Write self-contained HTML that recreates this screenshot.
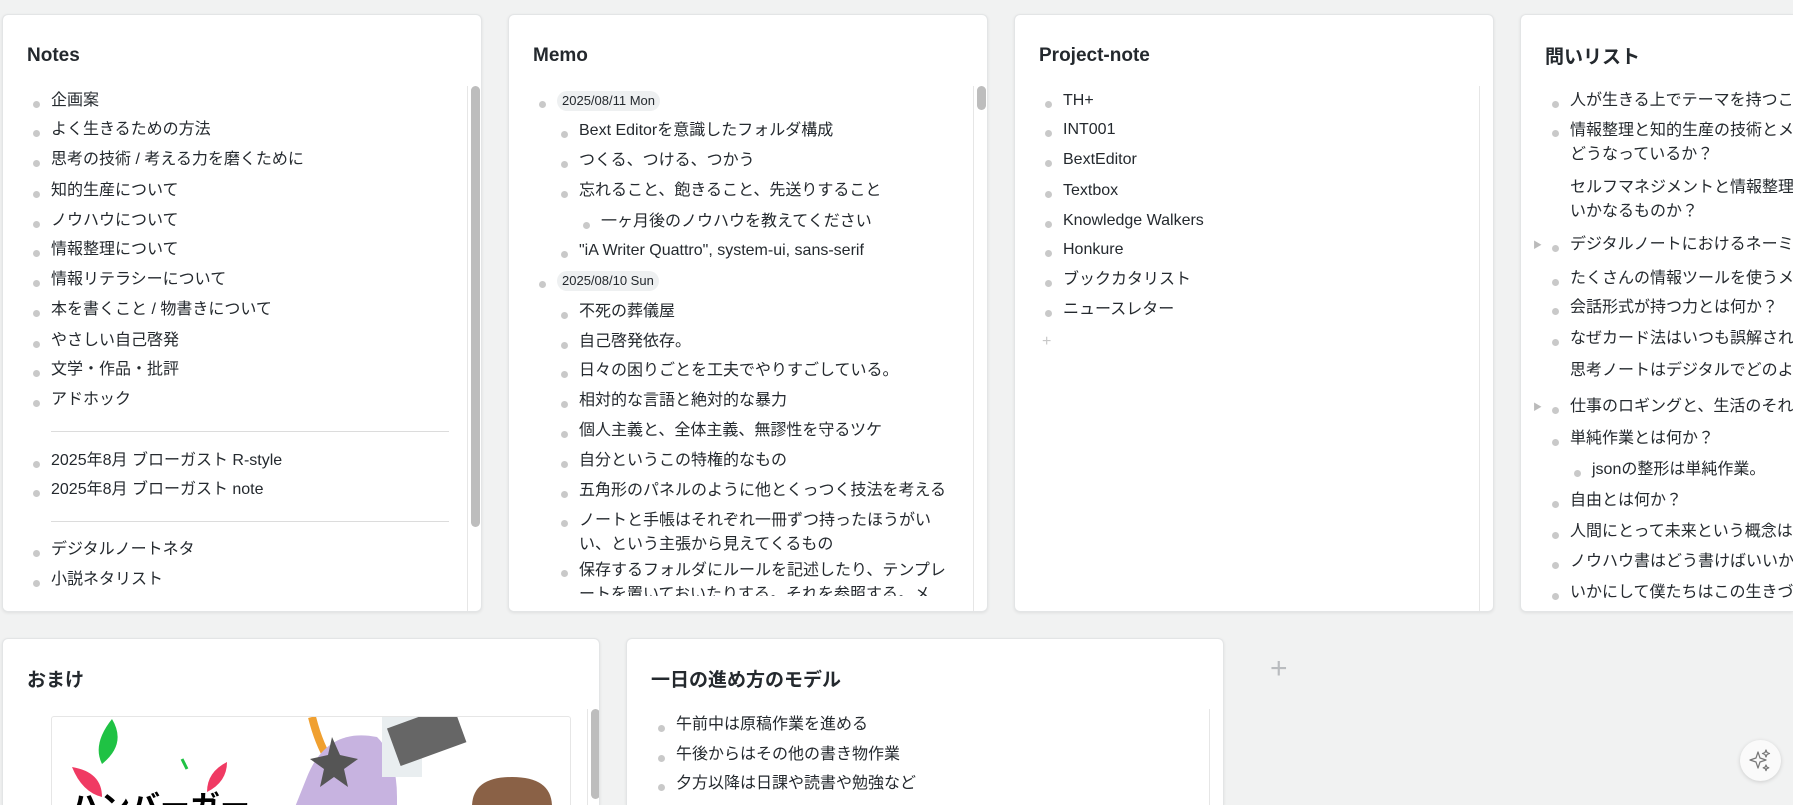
<!DOCTYPE html>
<html style="overflow:hidden;height:805px"><head><meta charset="utf-8"><style>
*{box-sizing:border-box;margin:0;padding:0}
body{width:1793px;height:805px;background:#f1f2f2;overflow:hidden;position:relative;font-family:"Liberation Sans","Noto Sans CJK JP",sans-serif;color:#24292e}
.card{position:absolute;background:#fff;border:1px solid #e3e5e6;border-radius:6px;box-shadow:0 1px 3px rgba(0,0,0,.08);overflow:hidden}
.t{position:absolute;left:24px;top:30px;font-size:19px;font-weight:bold;color:#24292e}
.i{position:absolute;height:30px;line-height:30px;font-size:16px;white-space:nowrap}
.i.b::before{content:"";position:absolute;left:-18px;top:15px;width:7px;height:7px;border-radius:50%;background:#c9c9c9}
.w{white-space:normal;line-height:24px;height:auto}
.w.b::before{top:11px}
.chip{display:inline-block;background:#eef0f1;border-radius:10px;font-size:13px;line-height:20px;padding:0 5px}
.sb{position:absolute;width:9px;border-radius:5px;background:#bdbdbd}
.tr{position:absolute;width:1px;background:#e6e6e6}
.sep{position:absolute;height:1px;background:#dcdcdc}
.ar{position:absolute;font-size:9px;color:#bbb}
</style></head><body>

<div class="card" style="left:2px;top:14px;width:480px;height:598px">
<div class="t">Notes</div>
<div class="tr" style="left:464px;top:71px;height:525px"></div>
<div class="sb" style="left:468px;top:71px;height:441px"></div>
<div class="i b" style="left:48px;top:71px">企画案</div>
<div class="i b" style="left:48px;top:100px">よく生きるための方法</div>
<div class="i b" style="left:48px;top:130px">思考の技術 / 考える力を磨くために</div>
<div class="i b" style="left:48px;top:161px">知的生産について</div>
<div class="i b" style="left:48px;top:191px">ノウハウについて</div>
<div class="i b" style="left:48px;top:220px">情報整理について</div>
<div class="i b" style="left:48px;top:250px">情報リテラシーについて</div>
<div class="i b" style="left:48px;top:280px">本を書くこと / 物書きについて</div>
<div class="i b" style="left:48px;top:311px">やさしい自己啓発</div>
<div class="i b" style="left:48px;top:340px">文学・作品・批評</div>
<div class="i b" style="left:48px;top:370px">アドホック</div>
<div class="sep" style="left:48px;top:416px;width:398px"></div>
<div class="i b" style="left:48px;top:431px">2025年8月 ブローガスト R-style</div>
<div class="i b" style="left:48px;top:460px">2025年8月 ブローガスト note</div>
<div class="sep" style="left:48px;top:506px;width:398px"></div>
<div class="i b" style="left:48px;top:520px">デジタルノートネタ</div>
<div class="i b" style="left:48px;top:550px">小説ネタリスト</div>
<div style="position:absolute;left:0;top:581px;width:464px;height:17px;background:#fff"></div>
</div>

<div class="card" style="left:508px;top:14px;width:480px;height:598px">
<div class="t">Memo</div>
<div class="tr" style="left:464px;top:71px;height:525px"></div>
<div class="sb" style="left:468px;top:71px;height:24px"></div>
<div class="i b" style="left:48px;top:71px"><span class="chip">2025/08/11 Mon</span></div>
<div class="i b" style="left:70px;top:101px">Bext Editorを意識したフォルダ構成</div>
<div class="i b" style="left:70px;top:131px">つくる、つける、つかう</div>
<div class="i b" style="left:70px;top:161px">忘れること、飽きること、先送りすること</div>
<div class="i b" style="left:92px;top:192px">一ヶ月後のノウハウを教えてください</div>
<div class="i b" style="left:70px;top:221px">"iA Writer Quattro", system-ui, sans-serif</div>
<div class="i b" style="left:48px;top:251px"><span class="chip">2025/08/10 Sun</span></div>
<div class="i b" style="left:70px;top:282px">不死の葬儀屋</div>
<div class="i b" style="left:70px;top:312px">自己啓発依存。</div>
<div class="i b" style="left:70px;top:341px">日々の困りごとを工夫でやりすごしている。</div>
<div class="i b" style="left:70px;top:371px">相対的な言語と絶対的な暴力</div>
<div class="i b" style="left:70px;top:401px">個人主義と、全体主義、無謬性を守るツケ</div>
<div class="i b" style="left:70px;top:431px">自分というこの特権的なもの</div>
<div class="i b" style="left:70px;top:461px">五角形のパネルのように他とくっつく技法を考える</div>
<div class="i b w" style="left:70px;top:494px;width:380px">ノートと手帳はそれぞれ一冊ずつ持ったほうがいい、という主張から見えてくるもの</div>
<div class="i b w" style="left:70px;top:544px;width:380px">保存するフォルダにルールを記述したり、テンプレートを置いておいたりする。それを参照する。メ</div>
<div style="position:absolute;left:0;top:581px;width:464px;height:17px;background:#fff"></div>
</div>

<div class="card" style="left:1014px;top:14px;width:480px;height:598px">
<div class="t">Project-note</div>
<div class="tr" style="left:464px;top:71px;height:525px"></div>
<div class="i b" style="left:48px;top:71px">TH+</div>
<div class="i b" style="left:48px;top:100px">INT001</div>
<div class="i b" style="left:48px;top:130px">BextEditor</div>
<div class="i b" style="left:48px;top:161px">Textbox</div>
<div class="i b" style="left:48px;top:191px">Knowledge Walkers</div>
<div class="i b" style="left:48px;top:220px">Honkure</div>
<div class="i b" style="left:48px;top:250px">ブックカタリスト</div>
<div class="i b" style="left:48px;top:280px">ニュースレター</div>
<div style="position:absolute;left:27px;top:318px;font-size:16px;color:#c8c8c8">+</div>
</div>

<div class="card" style="left:1520px;top:14px;width:273px;height:598px;border-right:none;border-radius:6px 0 0 6px">
<div class="t" style="top:27px">問いリスト</div>
<div class="i b" style="left:49px;top:71px">人が生きる上でテーマを持つこと</div>
<div class="i b w" style="left:49px;top:104px;width:260px">情報整理と知的生産の技術とメモ<br>どうなっているか？</div>
<div class="i w" style="left:49px;top:161px;width:260px">セルフマネジメントと情報整理の<br>いかなるものか？</div>
<div class="ar" style="left:12px;top:223px">▶</div>
<div class="i b" style="left:49px;top:215px">デジタルノートにおけるネーミング</div>
<div class="i b" style="left:49px;top:249px">たくさんの情報ツールを使うメリット</div>
<div class="i b" style="left:49px;top:278px">会話形式が持つ力とは何か？</div>
<div class="i b" style="left:49px;top:309px">なぜカード法はいつも誤解される</div>
<div class="i" style="left:49px;top:341px">思考ノートはデジタルでどのように</div>
<div class="ar" style="left:12px;top:385px">▶</div>
<div class="i b" style="left:49px;top:377px">仕事のロギングと、生活のそれ</div>
<div class="i b" style="left:49px;top:409px">単純作業とは何か？</div>
<div class="i b" style="left:71px;top:440px">jsonの整形は単純作業。</div>
<div class="i b" style="left:49px;top:471px">自由とは何か？</div>
<div class="i b" style="left:49px;top:502px">人間にとって未来という概念は</div>
<div class="i b" style="left:49px;top:532px">ノウハウ書はどう書けばいいか</div>
<div class="i b" style="left:49px;top:563px">いかにして僕たちはこの生きづらさ</div>
</div>

<div class="card" style="left:2px;top:638px;width:598px;height:167px;border-bottom:none;border-radius:6px 6px 0 0">
<div class="t" style="top:26px">おまけ</div>
<div class="tr" style="left:584px;top:70px;height:97px"></div>
<div class="sb" style="left:588px;top:70px;height:90px"></div>
<div style="position:absolute;left:48px;top:77px;width:520px;height:90px;border:1px solid #e6e6e6;border-bottom:none;border-radius:3px 3px 0 0;overflow:hidden;background:#fff">
<svg width="518" height="90">
<path d="M60 2 q-20 25 -10 45 q25 -20 10 -45z" fill="#1fc244"/>
<path d="M20 50 q10 25 30 30 q0 -25 -30 -30z" fill="#f03a63"/>
<path d="M175 45 q-20 10 -20 30 q20 -10 20 -30z" fill="#f03a63"/>
<path d="M130 42 l5 10" stroke="#1fc244" stroke-width="3"/>
<text x="18" y="100" font-size="30" font-weight="bold" font-family="Noto Sans CJK JP">ハンバーガー</text>
<path d="M260 0 q10 40 30 60" stroke="#f0a030" stroke-width="8" fill="none"/>
<path d="M255 60 q20 -50 70 -40 q20 20 20 60 l0 30 l-110 0z" fill="#c7b3e0"/>
<path d="M280 20 l8 18 l18 4 l-14 10 l4 18 l-14 -10 l-14 10 l4 -18 l-14 -10 l18 -4z" fill="#555"/>
<rect x="330" y="0" width="40" height="60" fill="#e9eef0"/>
<rect x="340" y="0" width="70" height="40" fill="#666" transform="rotate(-20 370 20)"/>
<path d="M420 90 q0 -30 40 -30 q40 0 40 30z" fill="#8a6146"/>
</svg>
</div>
</div>

<div class="card" style="left:626px;top:638px;width:598px;height:167px;border-bottom:none;border-radius:6px 6px 0 0">
<div class="t" style="top:26px">一日の進め方のモデル</div>
<div class="tr" style="left:582px;top:70px;height:97px"></div>
<div class="i b" style="left:49px;top:71px">午前中は原稿作業を進める</div>
<div class="i b" style="left:49px;top:101px">午後からはその他の書き物作業</div>
<div class="i b" style="left:49px;top:130px">夕方以降は日課や読書や勉強など</div>
</div>

<div style="position:absolute;left:1270px;top:652px;font-size:30px;color:#b9bcbf;font-weight:300">+</div>

<div style="position:absolute;left:1740px;top:740px;width:41px;height:41px;border-radius:50%;background:#fafafa;box-shadow:0 1px 4px rgba(0,0,0,.15)">
<svg width="41" height="41" viewBox="0 0 41 41"><path d="M18 12 l2 6 l6 2 l-6 2 l-2 6 l-2 -6 l-6 -2 l6 -2z M26 10 l1 2.5 l2.5 1 l-2.5 1 l-1 2.5 l-1 -2.5 l-2.5 -1 l2.5 -1z M26 25 l.8 2 l2 .8 l-2 .8 l-.8 2 l-.8 -2 l-2 -.8 l2 -.8z" fill="none" stroke="#777" stroke-width="1.2" stroke-linejoin="round"/></svg>
</div>
</body></html>
